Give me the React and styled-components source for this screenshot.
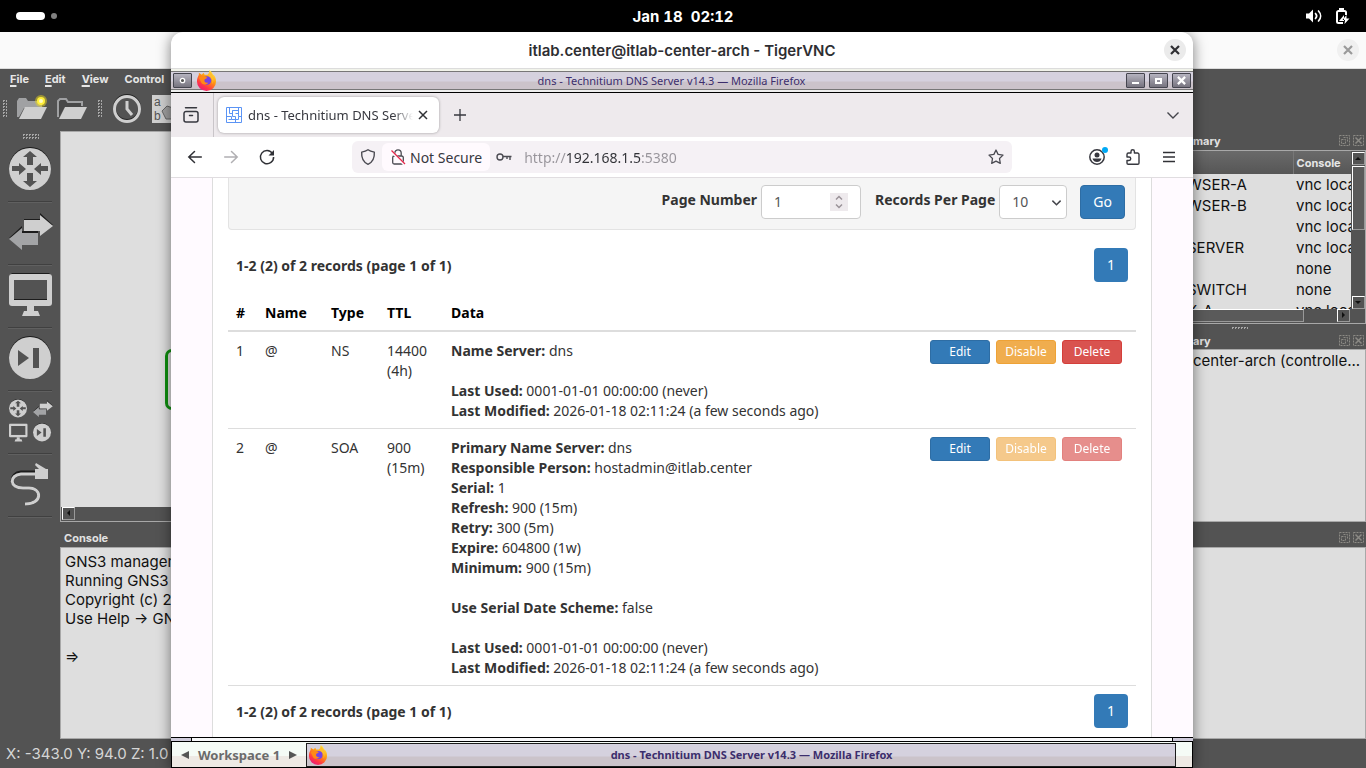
import React, { useState } from 'react';
import styled, { createGlobalStyle, css } from 'styled-components';

const RECORDS = [
    {
        id: 1,
        name: '@',
        type: 'NS',
        ttl: '14400',
        ttlText: '(4h)',
        locked: false,
        data: [
            ['Name Server:', 'dns'],
            null,
            ['Last Used:', '0001-01-01 00:00:00 (never)'],
            ['Last Modified:', '2026-01-18 02:11:24 (a few seconds ago)'],
        ],
    },
    {
        id: 2,
        name: '@',
        type: 'SOA',
        ttl: '900',
        ttlText: '(15m)',
        locked: true,
        data: [
            ['Primary Name Server:', 'dns'],
            ['Responsible Person:', 'hostadmin@itlab.center'],
            ['Serial:', '1'],
            ['Refresh:', '900 (15m)'],
            ['Retry:', '300 (5m)'],
            ['Expire:', '604800 (1w)'],
            ['Minimum:', '900 (15m)'],
            null,
            ['Use Serial Date Scheme:', 'false'],
            null,
            ['Last Used:', '0001-01-01 00:00:00 (never)'],
            ['Last Modified:', '2026-01-18 02:11:24 (a few seconds ago)'],
        ],
    },
];

const NODES = [
    ['WSER-A', 'vnc localhost'],
    ['WSER-B', 'vnc localhost'],
    ['', 'vnc localhost'],
    ['SERVER', 'vnc localhost'],
    ['', 'none'],
    ['SWITCH', 'none'],
    ['X-A', 'vnc localhost'],
];

/* ---------- icons ---------- */

const FirefoxIcon = ({ size }) => (
    <svg width={size} height={size} viewBox="0 0 22 22">
        <defs>
            <linearGradient id="fox" x1="0.8" y1="0" x2="0.2" y2="1">
                <stop offset="0" stopColor="#fff44f" />
                <stop offset="0.4" stopColor="#ff980e" />
                <stop offset="0.75" stopColor="#ff3647" />
                <stop offset="1" stopColor="#e31587" />
            </linearGradient>
        </defs>
        <path fill="url(#fox)" d="M14 0c3 2 3 4 4 5 2 1 3 4 3 7a10 10 0 0 1-20 0c0-3 1-5 2-7V3l3 2 2-2 1 2h3c1-1 2-2 2-5z" />
        <circle cx="11.500" cy="11" r="4.500" fill="#7542e5" />
        <path fill="#ff8a16" d="M3 8c3-2 6-2 9 0l-3 2c-1 3 2 4 4 3-2 3-7 3-8-1z" />
        <path fill="#ffbd2e" d="M14 1c4 4 6 9 3 14 1-4 0-7-4-9 1-2 1-3 1-5z" />
    </svg>
);

const FaviconIcon = () => (
    <svg width="16" height="16" viewBox="0 0 16 16" fill="none" stroke="#5b94f5" strokeWidth="1">
        <path d="M.5.5h15v15H.5zM3.500.5v6h3v-3h6M.5 9.500h5v3h-3M6.500 3.500v6h3v6M12.500.5v9h3M12.500 6.500h-3M9.500 12.500h3v-3M5.500 12.500h4" />
    </svg>
);

const ArchiveIcon = () => (
    <svg width="16" height="16" viewBox="0 0 16 16" fill="none" stroke="#37383f" strokeWidth="1.500" strokeLinecap="round">
        <path d="M2.500.8h11M1 6.500a2 2 0 0 1 2-2h10a2 2 0 0 1 2 2v6.500a2 2 0 0 1-2 2H3a2 2 0 0 1-2-2zM6.500 8.500h3" />
    </svg>
);

const CloseGlyph = ({ size = 10, width = 1.5 }) => (
    <svg width={size} height={size} viewBox="0 0 10 10" fill="none" stroke="currentColor" strokeWidth={width}>
        <path d="M1 1l8 8M9 1L1 9" />
    </svg>
);

const PlusIcon = () => (
    <svg width="14" height="14" viewBox="0 0 14 14" fill="none" stroke="#37383f" strokeWidth="1.300">
        <path d="M7 1v12M1 7h12" />
    </svg>
);

const ChevronIcon = ({ size = 12, width = 1.4 }) => (
    <svg width={size} height={size} viewBox="0 0 12 12" fill="none" stroke="#45464c" strokeWidth={width}>
        <path d="M.5 3.500L6 9l5.500-5.500" />
    </svg>
);

const ArrowIcon = ({ flip, color }) => (
    <svg width="14" height="14" viewBox="0 0 14 14" fill="none" stroke={color} strokeWidth="1.500" strokeLinecap="round">
        <path d={flip ? 'M.7 7h12.500M7.500 1.500L13.200 7l-5.700 5.500' : 'M13.300 7H.8M6.500 1.500L.8 7l5.700 5.500'} />
    </svg>
);

const ReloadIcon = () => (
    <svg width="16" height="16" viewBox="0 0 16 16" fill="none" stroke="#303136" strokeWidth="1.500">
        <path d="M13.500 4.500A6.600 6.600 0 1 0 14.600 8" />
        <path d="M15 1v5.500H9.500z" fill="#303136" stroke="none" />
    </svg>
);

const ShieldIcon = () => (
    <svg width="16" height="16" viewBox="0 0 16 16" fill="none" stroke="#4b4b52" strokeWidth="1.400" strokeLinejoin="round">
        <path d="M8 .8c2 1.500 4.300 2 6.300 2.300C14.700 8.500 13 13 8 15.300 3 13 1.300 8.500 1.700 3.100 3.700 2.800 6 2.300 8 .8z" />
    </svg>
);

const BrokenLockIcon = () => (
    <svg width="16" height="16" viewBox="0 0 16 16" fill="none" stroke="#4b4b52" strokeWidth="1.300">
        <path d="M4.800 7V4a3.200 3.200 0 0 1 6.400 0v3M2.700 8.500a1.500 1.500 0 0 1 1.500-1.500h7.600a1.500 1.500 0 0 1 1.500 1.500v5a1.500 1.500 0 0 1-1.500 1.500H4.200a1.500 1.500 0 0 1-1.500-1.500z" />
        <path d="M1 2l13.500 13.500" stroke="#fffafe" strokeWidth="2.500" />
        <path d="M1.500 1.500L15 15" stroke="#e8274b" />
    </svg>
);

const KeyIcon = () => (
    <svg width="16" height="16" viewBox="0 0 16 16" fill="none" stroke="#4b4b52" strokeWidth="1.400">
        <circle cx="4" cy="8" r="3" />
        <path d="M7 7.500h8.500M14 7.500V11M11 7.500V10" />
    </svg>
);

const StarIcon = () => (
    <svg width="16" height="16" viewBox="0 0 16 16" fill="none" stroke="#4b4b52" strokeWidth="1.300" strokeLinejoin="round">
        <path d="M8 1l2.100 4.400 4.900.7-3.500 3.400.8 4.900L8 12.100l-4.300 2.300.8-4.900L1 6.100l4.900-.7z" />
    </svg>
);

const AccountIcon = () => (
    <svg width="18" height="18" viewBox="0 0 18 18">
        <circle cx="9" cy="9" r="7.200" fill="none" stroke="#37383f" strokeWidth="1.500" />
        <circle cx="9" cy="7" r="2.500" fill="#37383f" />
        <path fill="#37383f" d="M4.500 10.500h9c-.5 2.500-2.500 3.500-4.500 3.500s-4-1-4.500-3.500z" />
        <circle cx="17" cy="2" r="3" fill="#00a9f5" />
    </svg>
);

const PuzzleIcon = () => (
    <svg width="16" height="16" viewBox="0 0 16 16" fill="none" stroke="#37383f" strokeWidth="1.400" strokeLinejoin="round">
        <path d="M2 7V5.500A1.500 1.500 0 0 1 3.500 4H6V2.500a1.700 1.700 0 0 1 3.400 0V4h3A1.500 1.500 0 0 1 14 5.500V14a1.200 1.200 0 0 1-1.200 1.200H3.200A1.200 1.200 0 0 1 2 14v-2.500h2a1.700 1.700 0 0 0 0-3.500H2z" />
    </svg>
);

const MenuIcon = () => (
    <svg width="12" height="12" viewBox="0 0 12 12" stroke="#303136" strokeWidth="1.300">
        <path d="M0 1.500h12M0 6h12M0 10.500h12" />
    </svg>
);

const VolumeIcon = () => (
    <svg width="16" height="16" viewBox="0 0 16 16" fill="none" stroke="#fff" strokeWidth="1.700" strokeLinecap="round">
        <path d="M0 5.500h3L7 1.500v13l-4-4H0z" fill="#fff" stroke="none" />
        <path d="M9.500 5.500c1.300 1.400 1.300 3.600 0 5" />
        <path d="M12.500 3c2.800 3 2.800 7 0 10" />
    </svg>
);

const BatteryIcon = () => (
    <svg width="16" height="16" viewBox="0 0 16 16">
        <path fill="none" stroke="#fff" strokeWidth="2" d="M9 15H4.500A1.500 1.500 0 0 1 3 13.500v-9A1.500 1.500 0 0 1 4.500 3h6A1.500 1.500 0 0 1 12 4.500V7" />
        <path fill="#fff" d="M5 0h5v3H5zM5 13l5-6v6zM12.500 7l-4 5H11l-.5 4 5-5.500H12.500z" />
    </svg>
);

const RouterShape = () => (
    <g>
        <circle cx="21" cy="21" r="21" fill="#1c1c1c" />
        <circle cx="21" cy="22" r="21" fill="#cfcfcf" />
        <path fill="#535353" d="M21 4l7 6h-4v8h-6v-8h-4zM21 40l7-6h-4v-8h-6v8h-4zM17 22l-7-6v3H3v5h7v4zM25 22l7-6v3h7v5h-7v4z" />
    </g>
);

const SwitchShape = () => (
    <g>
        <path fill="#1c1c1c" d="M15 9h16V3l13 12H15zM0 28l13-12v5h16v2z" />
        <path fill="#cfcfcf" d="M15 10h16V5l13 11-13 10v-5H15z" />
        <path fill="#a3a4a6" d="M29 35H13v5L0 29l13-11v5h16z" />
    </g>
);

const MonitorShape = () => (
    <g>
        <path fill="#1c1c1c" d="M3 0h37l3 3H0z" />
        <rect y="1" width="43" height="32" rx="3" fill="#cfcfcf" />
        <path fill="#535353" d="M5 7h33v20H5z" />
        <path fill="#1c1c1c" d="M5 26h33v1H5z" />
        <path fill="#cfcfcf" d="M18 33h7v5h4l2 5H13l2-5h3z" />
    </g>
);

const SkipShape = () => (
    <g>
        <circle cx="21" cy="21" r="21" fill="#1c1c1c" />
        <circle cx="21" cy="22" r="21" fill="#cfcfcf" />
        <path fill="#535353" d="M9 14l11 8-11 8zM24 12h6v20h-6z" />
    </g>
);

const AllShape = () => (
    <g>
        <g transform="translate(0 0) scale(.43)"><RouterShape /></g>
        <g transform="translate(24 0) scale(.45)"><SwitchShape /></g>
        <g transform="translate(0 24) scale(.43)"><MonitorShape /></g>
        <g transform="translate(24 24) scale(.43)"><SkipShape /></g>
    </g>
);

const CableShape = () => (
    <g fill="none" transform="translate(0 1)">
        <path d="M27 9H12C0 10 0 25 14 25h6c13 0 14 16-4 16" stroke="#1c1c1c" strokeWidth="3" />
        <path d="M27 11H12C0 12 0 25 14 25h6c13 0 14 16-4 16" stroke="#cfcfcf" strokeWidth="3" />
        <path fill="#cfcfcf" d="M26 6h4L26 2l1-2 10 6h2v10H26z" />
    </g>
);

const DEVICES = [
    { label: 'Routers', Shape: RouterShape },
    { label: 'Switches', Shape: SwitchShape },
    { label: 'End devices', Shape: MonitorShape },
    { label: 'Security devices', Shape: SkipShape },
    { label: 'All devices', Shape: AllShape },
    { label: 'Add a link', Shape: CableShape },
];

const FolderIcon = ({ glow }) => (
    <svg width="31" height="24" viewBox="0 0 31 24">
        <path fill={glow ? '#a0a1a3' : '#484848'} d="M1 4l2-3h7l2 3h14v7H8L3 20H1z" />
        {!glow && <path fill="none" stroke="#a0a1a3" strokeWidth="2" d="M2 20V4l2-2h6l2 3h14v4" />}
        <path fill="#cfcfcf" d="M9 10h22l-6 12H3z" />
        {glow && (
            <g>
                <circle cx="25" cy="4" r="6" fill="#e7d51c" opacity="0.500" />
                <circle cx="25" cy="4" r="4" fill="#ffee3a" />
                <circle cx="25" cy="4" r="2" fill="#fffbc0" />
            </g>
        )}
    </svg>
);

const ClockIcon = () => (
    <svg width="28" height="28" viewBox="0 0 28 28" fill="none">
        <circle cx="14" cy="13" r="12.500" stroke="#222" strokeWidth="3" />
        <circle cx="14" cy="14" r="12.500" stroke="#cfcfcf" strokeWidth="3" />
        <path d="M14 6v8l5 6" stroke="#cfcfcf" strokeWidth="3" />
    </svg>
);

const LabelsIcon = () => (
    <svg width="30" height="28" viewBox="0 0 30 28">
        <path fill="#cfcfcf" d="M0 0h30v28H0z" />
        <path fill="#a0a0a0" stroke="#666" d="M10 16l5-5 6 2 9 8v3H14z" />
        <g fill="#535353" fontFamily="Liberation Sans" fontSize="12">
            <text x="2" y="11">a</text>
            <text x="2" y="25">b</text>
        </g>
    </svg>
);

const DockIcons = () => (
    <svg width="26" height="11" viewBox="0 0 26 11" fill="none" stroke="#8c8a85" strokeDasharray="2 1">
        <path d="M.5.5h10v10H.5zM4.500 2.500h4v4M2.500 4.500h4v4h-4zM14.500.5h10v10h-10z" />
        <path d="M16.500 2.500l6 6M22.500 2.500l-6 6" strokeWidth="1.500" strokeDasharray="none" />
    </svg>
);

/* ---------- page parts ---------- */

const WindowTitle = 'dns - Technitium DNS Server v14.3 — Mozilla Firefox';

function Pager() {
    return (
        <PagerRow>
            <b>1-2 (2) of 2 records (page 1 of 1)</b>
            <PageLink href="#page-1">1</PageLink>
        </PagerRow>
    );
}

function RecordsTable() {
    return (
        <Table>
            <colgroup>
                <col width="29" />
                <col width="66" />
                <col width="56" />
                <col width="64" />
                <col />
                <col width="214" />
            </colgroup>
            <thead>
                <tr>
                    <th>#</th>
                    <th>Name</th>
                    <th>Type</th>
                    <th>TTL</th>
                    <th>Data</th>
                    <th aria-label="Actions" />
                </tr>
            </thead>
            <tbody>
                {RECORDS.map((record) => (
                    <tr key={record.id}>
                        <td>{record.id}</td>
                        <td>{record.name}</td>
                        <td>{record.type}</td>
                        <td>{record.ttl}<br />{record.ttlText}</td>
                        <td>
                            {record.data.map((line, i) => (
                                <DataLine key={i}>
                                    {line && <><b>{line[0]}</b> {line[1]}</>}
                                </DataLine>
                            ))}
                        </td>
                        <ActionsCell>
                            <Actions>
                                <ActionButton $tone="primary">Edit</ActionButton>
                                <ActionButton $tone="warning" disabled={record.locked}>Disable</ActionButton>
                                <ActionButton $tone="danger" disabled={record.locked}>Delete</ActionButton>
                            </Actions>
                        </ActionsCell>
                    </tr>
                ))}
            </tbody>
        </Table>
    );
}

function Browser() {
    const [url, setUrl] = useState('http://192.168.1.5:5380');
    const [page, setPage] = useState('1');

    return (
        <>
            <TabStrip>
                <ArchiveCell><IconButton aria-label="View recent browsing"><ArchiveIcon /></IconButton></ArchiveCell>
                <Tab>
                    <FaviconIcon />
                    <TabLabel>dns - Technitium DNS Server</TabLabel>
                    <TabClose aria-label="Close tab"><CloseGlyph /></TabClose>
                </Tab>
                <IconButton aria-label="New tab"><PlusIcon /></IconButton>
                <Spacer />
                <IconButton aria-label="List all tabs"><ChevronIcon /></IconButton>
            </TabStrip>
            <NavBar>
                <IconButton aria-label="Back"><ArrowIcon color="#303136" /></IconButton>
                <IconButton aria-label="Forward"><ArrowIcon flip color="#b0afb2" /></IconButton>
                <IconButton aria-label="Reload"><ReloadIcon /></IconButton>
                <UrlBar>
                    <ShieldIcon />
                    <SecurityButton><BrokenLockIcon />Not Secure</SecurityButton>
                    <KeyIcon />
                    <UrlInput aria-label="Address" value={url} onChange={(e) => setUrl(e.target.value)} />
                    <StarIcon />
                </UrlBar>
                <IconButton aria-label="Account"><AccountIcon /></IconButton>
                <IconButton aria-label="Extensions"><PuzzleIcon /></IconButton>
                <IconButton aria-label="Application menu"><MenuIcon /></IconButton>
            </NavBar>
            <Page>
                <Container>
                    <FilterForm onSubmit={(e) => e.preventDefault()}>
                        <label htmlFor="page-number">Page Number</label>
                        <NumberBox>
                            <input id="page-number" value={page} onChange={(e) => setPage(e.target.value)} />
                            <Spinner>
                                <svg width="8" height="14" viewBox="0 0 8 14" fill="none" stroke="#9a9399" strokeWidth="1.500">
                                    <path d="M1 4.500l3-3 3 3M1 9.500l3 3 3-3" />
                                </svg>
                            </Spinner>
                        </NumberBox>
                        <label htmlFor="per-page">Records Per Page</label>
                        <SelectBox>
                            <select id="per-page" defaultValue="10">
                                <option>10</option>
                                <option>25</option>
                                <option>50</option>
                            </select>
                            <ChevronIcon size={9} width={2} />
                        </SelectBox>
                        <GoButton>Go</GoButton>
                    </FilterForm>
                    <Pager />
                    <RecordsTable />
                    <Pager />
                </Container>
            </Page>
        </>
    );
}

function VncWindow() {
    return (
        <VncFrame>
            <HeaderBar>
                <h1>itlab.center@itlab-center-arch - TigerVNC</h1>
                <RoundClose aria-label="Close TigerVNC"><CloseGlyph size={10} width={2.2} /></RoundClose>
            </HeaderBar>
            <WmTitle>
                <WmButton aria-label="Window menu">
                    <svg width="7" height="7"><circle cx="3.500" cy="3.500" r="2.200" fill="#555" stroke="#fff" strokeWidth="1.300" /></svg>
                </WmButton>
                <FirefoxIcon size={21} />
                <span>{WindowTitle}</span>
                <WmButton aria-label="Minimize">
                    <svg width="9" height="9"><path d="M1 6h7v2H1z" fill="#fff" /></svg>
                </WmButton>
                <WmButton aria-label="Maximize">
                    <svg width="9" height="9"><path d="M1 2h7v6H1z M3 4v2h3V4z" fill="#fff" fillRule="evenodd" /></svg>
                </WmButton>
                <WmButton aria-label="Close"><CloseGlyph size={9} width={2.5} /></WmButton>
            </WmTitle>
            <Browser />
            <ResizeHandle><i /><i /><i /></ResizeHandle>
            <TaskBar>
                <PagerArrow aria-label="Previous workspace">
                    <svg width="8" height="8"><path d="M8 0v8L0 4z" fill="#555" /></svg>
                </PagerArrow>
                <b>Workspace 1</b>
                <PagerArrow aria-label="Next workspace">
                    <svg width="8" height="8"><path d="M0 0v8l8-4z" fill="#555" /></svg>
                </PagerArrow>
                <TaskButton><FirefoxIcon size={20} /><span>{WindowTitle}</span></TaskButton>
            </TaskBar>
        </VncFrame>
    );
}

function GnsWindow() {
    return (
        <GnsFrame>
            <GnsHeader><RoundClose $faded aria-label="Close GNS3"><CloseGlyph size={10} width={2.2} /></RoundClose></GnsHeader>
            <MenuBar>
                {['File', 'Edit', 'View'].map((item) => (
                    <button key={item}><u>{item[0]}</u>{item.slice(1)}</button>
                ))}
                <button>Control</button>
            </MenuBar>
            <ToolBar>
                <ToolGroup $gap={9}>
                    <Grip $w={5} $h={17} />
                    <button aria-label="New project"><FolderIcon glow /></button>
                    <button aria-label="Open project"><FolderIcon /></button>
                </ToolGroup>
                <ToolGroup $gap={11}>
                    <Grip $w={5} $h={17} />
                    <button aria-label="Snapshots"><ClockIcon /></button>
                    <button aria-label="Interface labels"><LabelsIcon /></button>
                </ToolGroup>
            </ToolBar>
            <GnsBody>
                <DeviceBar>
                    <Grip $w={17} $h={5} />
                    {DEVICES.map(({ label, Shape }) => (
                        <button key={label} aria-label={label}>
                            <svg width="44" height="44" viewBox="-1 1 44 44"><Shape /></svg>
                        </button>
                    ))}
                </DeviceBar>
                <Docks>
                    <TopDocks>
                        <Canvas>
                            <NodeFrame />
                            <CanvasScroll><ScrollButton $dir="left" /></CanvasScroll>
                        </Canvas>
                        <SideDocks>
                            <DockTitle><span>mary</span><DockIcons /></DockTitle>
                            <Topology>
                                <TopologyView>
                                    <TableClip>
                                        <TopologyTable>
                                            <thead><tr><th aria-label="Node" /><th>Console</th></tr></thead>
                                            <tbody>
                                                {NODES.map(([name, con], i) => (
                                                    <tr key={i}><td>{name}</td><td>{con}</td></tr>
                                                ))}
                                            </tbody>
                                        </TopologyTable>
                                    </TableClip>
                                    <VScroll><ScrollButton $dir="up" /><VThumb /><ScrollButton $dir="down" /></VScroll>
                                </TopologyView>
                                <HScroll><HThumb /><ScrollButton $dir="right" /></HScroll>
                            </Topology>
                            <Splitter><Grip $w={17} $h={2} /></Splitter>
                            <DockTitle $short><span>ary</span><DockIcons /></DockTitle>
                            <ServersView>center-arch (controlle...</ServersView>
                        </SideDocks>
                    </TopDocks>
                    <ConsoleTitle><span>Console</span><DockIcons /></ConsoleTitle>
                    <ConsoleView>
                        <p>GNS3 management console.</p>
                        <p>Running GNS3 version</p>
                        <p>Copyright (c) 2006-2026</p>
                        <p>Use Help → GNS3 Doctor</p>
                        <p>&nbsp;</p>
                        <p>⇒</p>
                    </ConsoleView>
                </Docks>
            </GnsBody>
            <StatusBar>X: -343.0 Y: 94.0 Z: 1.0</StatusBar>
        </GnsFrame>
    );
}

function App() {
    return (
        <Screen>
            <GlobalStyle />
            <TopBar>
                <Workspaces><i /><i /></Workspaces>
                <time>Jan 18&nbsp; 02:12</time>
                <Tray><VolumeIcon /><BatteryIcon /></Tray>
            </TopBar>
            <Desktop>
                <GnsWindow />
                <VncWindow />
            </Desktop>
        </Screen>
    );
}

/* ---------- styles ---------- */

const GlobalStyle = createGlobalStyle`
    * {
        box-sizing: border-box;
    }
    body {
        margin: 0;
        overflow: hidden;
    }
    button, input, select {
        font: inherit;
        color: inherit;
        margin: 0;
    }
    button {
        border: 0;
        padding: 0;
        background: none;
    }
    svg {
        display: block;
        flex: none;
        overflow: visible;
    }
`;

const Screen = styled.div`
    display: flex;
    flex-direction: column;
    height: 100vh;
    font-family: Inter, sans-serif;
    font-size: 15px;
`;

const TopBar = styled.header`
    display: grid;
    grid-template-columns: 1fr auto 1fr;
    align-items: center;
    height: 32px;
    padding: 0 16px;
    background: #000;
    color: #fff;
    font-weight: 700;
    font-variant-numeric: tabular-nums;
`;

const Workspaces = styled.div`
    display: flex;
    align-items: center;
    gap: 6px;

    i {
        width: 6px;
        height: 6px;
        border-radius: 4px;
        background: #808080;
    }

    i:first-child {
        width: 29px;
        height: 8px;
        background: #fff;
    }
`;

const Tray = styled.div`
    display: flex;
    justify-content: flex-end;
    gap: 12px;
`;

const Desktop = styled.main`
    position: relative;
    flex: 1;
    min-height: 0;
    overflow: hidden;
`;

const RoundClose = styled.button`
    display: flex;
    align-items: center;
    justify-content: center;
    width: 22px;
    height: 22px;
    border-radius: 50%;
    background: ${(p) => (p.$faded ? '#f0f0f0' : '#ebebeb')};
    color: ${(p) => (p.$faded ? '#999' : '#2e2e32')};
`;

/* GNS3 */

const GnsFrame = styled.section`
    display: flex;
    flex-direction: column;
    height: 100%;
    background: #535353;
`;

const GnsHeader = styled.div`
    display: flex;
    align-items: center;
    justify-content: flex-end;
    height: 37px;
    padding: 0 7px;
    background: #fafafa;
    border-bottom: 1px solid #dcdcdc;
`;

const MenuBar = styled.nav`
    display: flex;
    align-items: center;
    gap: 16px;
    height: 19px;
    padding-left: 10px;
    color: #e6e6e6;
    font-size: 11px;
    font-weight: 700;

    u {
        text-underline-offset: 2px;
        text-decoration-thickness: 2px;
    }
`;

const ToolBar = styled.div`
    display: flex;
    gap: 10px;
    height: 43px;
    padding: 0 0 2px 2px;
`;

const ToolGroup = styled.div`
    display: flex;
    align-items: center;
    gap: ${(p) => p.$gap}px;
`;

const Grip = styled.div`
    flex: none;
    width: ${(p) => p.$w}px;
    height: ${(p) => p.$h}px;
    background: repeating-conic-gradient(#a8a8a8 0 25%, transparent 0 100%) 0 0 / 3px 3px;
`;

const GnsBody = styled.div`
    display: flex;
    flex: 1;
    min-height: 0;
`;

const DeviceBar = styled.div`
    display: flex;
    flex-direction: column;
    align-items: center;
    width: 60px;
    padding-top: 3px;

    button {
        display: flex;
        align-items: center;
        justify-content: center;
        width: 44px;
        height: 63px;
        border-bottom: 1px solid #404040;
        box-shadow: 0 1px #606060;
    }
`;

const Docks = styled.div`
    display: flex;
    flex-direction: column;
    flex: 1;
    min-width: 0;
`;

const TopDocks = styled.div`
    display: flex;
    flex: 1;
    min-height: 0;
`;

const Canvas = styled.div`
    position: relative;
    display: flex;
    flex-direction: column;
    justify-content: flex-end;
    flex: 1;
    border: 1px solid #a8a8a8;
    background: #dedede;
`;

const NodeFrame = styled.div`
    position: absolute;
    left: 104px;
    top: 217px;
    width: 90px;
    height: 61px;
    border: 3px solid #109010;
    border-radius: 7px;
`;

const CanvasScroll = styled.div`
    height: 14px;
    padding: 0 1px;
    background: #535353;
`;

const ARROWS = {
    left: 'border-right-color: #111; left: 1px;',
    right: 'border-left-color: #111; left: 4px;',
    up: 'border-bottom-color: #111; top: 1px;',
    down: 'border-top-color: #111; top: 4px;',
};

const ScrollButton = styled.button.attrs({ type: 'button' })`
    position: relative;
    display: block;
    flex: none;
    width: 13px;
    height: 13px;
    border: 1px solid;
    border-color: #fff #999 #999 #fff;

    &::after {
        content: '';
        position: absolute;
        left: 2px;
        top: 2px;
        border: 3px solid transparent;
        ${(p) => ARROWS[p.$dir]}
    }
`;

const SideDocks = styled.aside`
    display: flex;
    flex-direction: column;
    width: 182px;
`;

const DockTitle = styled.div`
    display: flex;
    align-items: center;
    justify-content: space-between;
    height: ${(p) => (p.$short ? 17 : 19)}px;
    padding: 0 1px 0 9px;
    color: #e2e2e2;
    font-size: 11px;
    font-weight: 700;
`;

const Topology = styled.div`
    height: 174px;
    border: 1px solid #a8a8a8;
    background: #dedede;
`;

const TopologyView = styled.div`
    display: flex;
    height: 158px;
`;

const TableClip = styled.div`
    flex: 1;
    min-width: 0;
    overflow: hidden;
`;

const TopologyTable = styled.table`
    width: 100%;
    table-layout: fixed;
    border-collapse: collapse;
    color: #111;

    thead tr {
        height: 23px;
        background: linear-gradient(#6a6a6a, #565656);
        color: #e6e6e6;
        font-size: 11px;
        text-align: left;
    }

    th, td {
        padding: 0 0 0 3px;
        white-space: nowrap;
        overflow: hidden;
    }

    td:first-child {
        padding-left: 2px;
    }

    th:first-child {
        width: 108px;
        border-right: 1px solid #777;
    }

    tbody tr {
        height: 21px;
    }
`;

const VScroll = styled.div`
    display: flex;
    flex-direction: column;
    align-items: center;
    gap: 1px;
    width: 14px;
    padding-top: 1px;
    background: #535353;

    button:last-child {
        margin-top: auto;
    }
`;

const thumb = css`
    border: 1px solid;
    border-color: #fff #999 #999 #fff;
    background: #5a5a5a;
`;

const VThumb = styled.div`
    ${thumb}
    width: 13px;
    height: 64px;
`;

const HScroll = styled.div`
    display: flex;
    justify-content: space-between;
    height: 14px;
    padding-right: 15px;
    background: #535353;
`;

const HThumb = styled.div`
    ${thumb}
    width: 119px;
    height: 13px;
`;

const Splitter = styled.div`
    display: flex;
    align-items: center;
    height: 8px;
    padding-left: 47px;
`;

const ServersView = styled.div`
    flex: 1;
    padding-left: 8px;
    border: 1px solid #a8a8a8;
    background: #dedede;
    color: #111;
    line-height: 21px;
    white-space: nowrap;
`;

const ConsoleTitle = styled(DockTitle)`
    height: 25px;
    padding: 6px 1px 0 4px;
`;

const ConsoleView = styled.div`
    height: 192px;
    padding: 4px;
    border: 1px solid #a8a8a8;
    background: #dedede;
    color: #111;

    p {
        margin: 0;
        line-height: 19px;
    }
`;

const StatusBar = styled.footer`
    height: 29px;
    padding-left: 6px;
    color: #d6d6d6;
    line-height: 29px;
`;

/* VNC window */

const VncFrame = styled.section`
    position: absolute;
    top: 0;
    bottom: 0;
    left: 171px;
    right: 173px;
    display: flex;
    flex-direction: column;
    overflow: hidden;
    border-radius: 12px 12px 0 0;
    background: #fff;
    box-shadow: 0 2px 14px rgba(0, 0, 0, 0.5);
    font-family: 'Noto Sans', sans-serif;
    font-size: 14px;
`;

const HeaderBar = styled.div`
    display: grid;
    grid-template-columns: 22px 1fr 22px;
    align-items: center;
    height: 37px;
    padding: 0 7px;
    border-bottom: 1px solid #dcdcdc;

    h1 {
        grid-column: 2;
        margin: 0;
        color: #2e2e32;
        font: 600 15px Inter, sans-serif;
        text-align: center;
    }
`;

const WmTitle = styled.div`
    display: flex;
    align-items: center;
    gap: 4px;
    height: 24px;
    padding: 0 2px;
    border-bottom: 1px solid #000;
    background:
        linear-gradient(#f1f3ea 2px, #777 2px 3px, #d5d1de 3px 12px, #cbc3ca 13px 20px, #777 20px 21px, #eee 21px);

    span {
        flex: 1;
        color: #3c2e6c;
        font-size: 11px;
        text-align: center;
    }
`;

const WmButton = styled.button`
    display: flex;
    align-items: center;
    justify-content: center;
    width: 19px;
    height: 15px;
    border: 1px solid #45454f;
    border-radius: 1px;
    background: linear-gradient(#b5b3bf, #77747f);
    color: #fff;
`;

const TabStrip = styled.div`
    display: flex;
    align-items: center;
    height: 44px;
    padding-right: 2px;
    background: #eeeaed;
`;

const IconButton = styled.button`
    display: flex;
    align-items: center;
    justify-content: center;
    flex: none;
    width: 36px;
    height: 32px;
`;

const ArchiveCell = styled.div`
    display: flex;
    align-items: center;
    width: 43px;
    height: 44px;
    padding-left: 2px;
    border-right: 1px solid #c9c5c9;
`;

const Tab = styled.div`
    display: flex;
    align-items: center;
    width: 221px;
    height: 36px;
    margin: 0 3px 0 4px;
    padding: 0 6px 0 8px;
    border-radius: 6px;
    background: #fff;
    box-shadow: 0 0 3px rgba(0, 0, 0, 0.35);
`;

const TabLabel = styled.span`
    flex: 1;
    margin-left: 6px;
    overflow: hidden;
    color: #37383f;
    font-size: 13px;
    white-space: nowrap;
    mask-image: linear-gradient(to left, transparent, #000 20px);
`;

const TabClose = styled.button`
    display: flex;
    align-items: center;
    justify-content: center;
    width: 20px;
    height: 24px;
    color: #303136;
`;

const Spacer = styled.div`
    flex: 1;
`;

const NavBar = styled.div`
    display: flex;
    align-items: center;
    height: 41px;
    padding: 0 6px;
    border-bottom: 1px solid #e0dde0;
`;

const UrlBar = styled.div`
    display: flex;
    align-items: center;
    flex: 1;
    height: 32px;
    margin: 0 67px;
    padding: 0 8px;
    border-radius: 6px;
    background: #f5f1f5;
`;

const SecurityButton = styled.button`
    display: flex;
    align-items: center;
    gap: 4px;
    height: 28px;
    margin: 0 6px;
    padding: 0 8px;
    border-radius: 6px;
    background: #fffafe;
    color: #37383f;
    white-space: nowrap;
`;

/* scheme and port are dimmed, the host stays dark */
const UrlInput = styled.input`
    flex: 1;
    min-width: 0;
    margin-left: 12px;
    padding: 0;
    border: 0;
    outline: 0;
    background: linear-gradient(90deg, #97949a 42px, #303136 42px 118px, #97949a 118px);
    background-clip: text;
    color: transparent;
    caret-color: #303136;
`;

const Page = styled.div`
    flex: 1;
    min-height: 0;
    padding: 0 41px;
    overflow: hidden;
    background: #fffaff;
    color: #333;
    line-height: 20px;
`;

const Container = styled.div`
    height: 100%;
    padding: 0 15px;
    border: solid #ddd;
    border-width: 0 1px;
    background: #fff;
    overflow: hidden;
`;

const FilterForm = styled.form`
    display: flex;
    justify-content: flex-end;
    padding: 7px 10px 10px;
    border: 1px solid #e3e3e3;
    border-top: 0;
    border-radius: 0 0 4px 4px;
    background: #f5f5f5;

    label {
        margin: 5px 4px 0 14px;
        font-weight: 700;
    }
`;

const field = css`
    display: flex;
    align-items: center;
    height: 34px;
    border: 1px solid #ccc;
    border-radius: 4px;
    background: #fff;
    color: #555;
`;

const NumberBox = styled.div`
    ${field}
    width: 100px;
    padding: 0 12px;

    input {
        flex: 1;
        min-width: 0;
        padding: 0;
        border: 0;
        outline: 0;
    }
`;

const Spinner = styled.span`
    display: flex;
    align-items: center;
    justify-content: center;
    width: 18px;
    height: 18px;
    background: #eeeaed;
`;

const SelectBox = styled.div`
    ${field}
    position: relative;
    width: 68px;

    select {
        width: 100%;
        height: 32px;
        padding: 0 12px;
        border: 0;
        outline: 0;
        appearance: none;
        background: none;
    }

    svg {
        position: absolute;
        right: 5px;
        pointer-events: none;
    }
`;

const GoButton = styled.button`
    height: 34px;
    margin-left: 13px;
    padding: 0 12px;
    border: 1px solid #2e6da4;
    border-radius: 4px;
    background: #337ab7;
    color: #fff;
`;

const PagerRow = styled.div`
    display: flex;
    align-items: center;
    justify-content: space-between;
    padding: 8px;

    ${FilterForm} + & {
        padding: 18px 8px 12px;
    }

    b {
        padding-top: 2px;
    }
`;

const PageLink = styled.a`
    width: 34px;
    border-radius: 4px;
    background: #337ab7;
    color: #fff;
    line-height: 34px;
    text-align: center;
    text-decoration: none;
`;

const Table = styled.table`
    width: 100%;
    table-layout: fixed;
    border-collapse: separate;
    border-spacing: 0;

    th, td {
        padding: 9px 8px 7px;
        text-align: left;
        vertical-align: top;
        border-bottom: 1px solid #ddd;
    }

    th {
        color: #000;
        border-bottom-width: 2px;
    }
`;

const ActionsCell = styled.td`
    && {
        padding-top: 8px;
    }
`;

const DataLine = styled.div`
    min-height: 20px;
`;

const Actions = styled.div`
    display: flex;
    gap: 6px;
`;

const TONES = {
    primary: ['#337ab7', '#2e6da4'],
    warning: ['#f0ad4e', '#eea236'],
    danger: ['#d9534f', '#d43f3a'],
};

const ActionButton = styled.button`
    width: 60px;
    height: 24px;
    border: 1px solid ${(p) => TONES[p.$tone][1]};
    border-radius: 3px;
    background: ${(p) => TONES[p.$tone][0]};
    color: #fff;
    font-size: 12px;

    &:disabled {
        opacity: 0.65;
    }
`;

const ResizeHandle = styled.div`
    display: flex;
    gap: 1px;
    height: 5px;
    border: solid #000;
    border-width: 1px 0;
    background: #000;

    i {
        width: 20px;
        background: #cfcbdb;
    }

    i:nth-child(2) {
        flex: 1;
        background: #f8f8fa;
    }
`;

const TaskBar = styled.div`
    display: flex;
    align-items: center;
    height: 26px;
    padding: 1px 16px 1px 0;
    border: solid #000;
    border-width: 0 1px 1px;
    background: linear-gradient(#f5fbf6 14px, #eee9e4 14px);

    b {
        flex: none;
        color: #6b6b6b;
        font-size: 13px;
    }
`;

const PagerArrow = styled.button`
    display: flex;
    align-items: center;
    justify-content: center;
    width: 26px;
    height: 22px;
`;

const TaskButton = styled.button`
    display: flex;
    align-items: center;
    flex: 1;
    height: 24px;
    padding-left: 1px;
    border: 1px solid #1c1c1c;
    background: linear-gradient(#d5d1de 12px, #cbc3ca 13px);
    color: #3c2e6c;
    font-size: 11px;
    font-weight: 700;

    span {
        flex: 1;
    }
`;

export default App;
